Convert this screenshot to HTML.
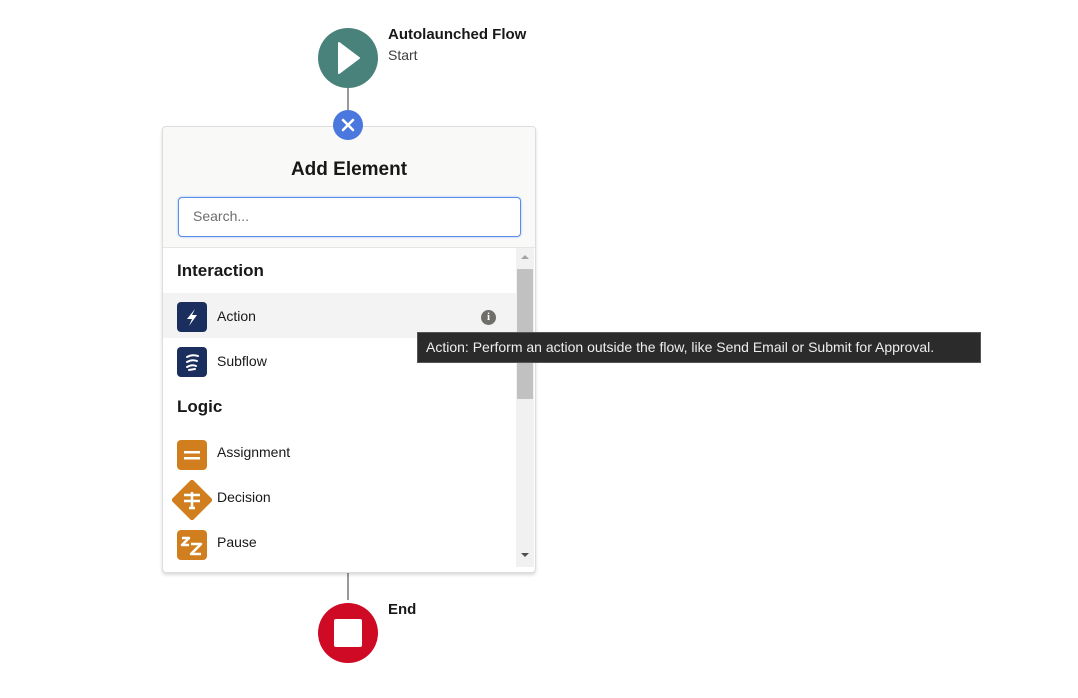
<!DOCTYPE html><html><head><style>
body{margin:0;width:1078px;height:698px;background:#fff;font-family:"Liberation Sans",sans-serif;position:relative;overflow:hidden;color:#181818}
.a{position:absolute}
.ic{position:absolute;left:177px;width:30px;height:30px;border-radius:4px}
.lbl{position:absolute;left:217px;font-size:14px;color:#181818}
</style></head><body>
<div class="a" style="left:347px;top:88px;width:2px;height:30px;background:#999"></div>
<div class="a" style="left:347px;top:566px;width:2px;height:34px;background:#999"></div>
<div class="a" style="left:318px;top:28px;width:60px;height:60px;border-radius:50%;background:#48827a"></div>
<svg class="a" style="left:318px;top:28px" width="60" height="60"><path d="M21 15 L41 30 L21 45Z" fill="#fff" stroke="#fff" stroke-width="2" stroke-linejoin="round"/></svg>
<div class="a" style="left:388px;top:26px;font-size:15px;font-weight:bold">Autolaunched Flow</div>
<div class="a" style="left:388px;top:47px;font-size:14px;color:#3e3e3c">Start</div>
<div class="a" style="left:162px;top:126px;width:372px;height:445px;border:1px solid #ddd;border-radius:4px;background:#fff;box-shadow:0 2px 3px rgba(0,0,0,.15);overflow:hidden">
 <div class="a" style="left:0;top:0;width:372px;height:120px;background:#f9f9f8;border-bottom:1px solid #e5e5e5"></div>
 <div class="a" style="left:0;top:32px;width:372px;text-align:center;font-size:19px;font-weight:bold">Add Element</div>
 <div class="a" style="left:15px;top:70px;width:341px;height:38px;border:1px solid #5a8ee6;border-radius:4px;background:#fff;box-shadow:0 0 2px #9ec0f5"></div>
 <div class="a" style="left:30px;top:81px;font-size:14px;color:#706e6b">Search...</div>
 <div class="a" style="left:353px;top:121px;width:18px;height:319px;background:#f1f1f1"></div>
 <div class="a" style="left:354px;top:142px;width:16px;height:130px;background:#c1c1c1"></div>
 <svg class="a" style="left:353px;top:124px" width="18" height="10"><path d="M5 8 L9 4 L13 8Z" fill="#a3a3a3"/></svg>
 <svg class="a" style="left:353px;top:424px" width="18" height="10"><path d="M5 2 L9 6 L13 2Z" fill="#505050"/></svg>
 <div class="a" style="left:0;top:166px;width:353px;height:45px;background:#f3f3f3"></div>
</div>
<div class="a" style="left:177px;top:261px;font-size:17px;font-weight:bold">Interaction</div>
<div class="a" style="left:177px;top:397px;font-size:17px;font-weight:bold">Logic</div>
<div class="ic" style="top:302px;background:#1b2f5e"></div>
<svg class="a" style="left:177px;top:302px" width="30" height="30"><path d="M18 7 L10 17 L15 17 L12 24 L20 13 L15 13 Z" fill="#fff"/></svg>
<div class="lbl" style="top:308px">Action</div>
<div class="a" style="left:481px;top:310px;width:15px;height:15px;border-radius:50%;background:#706e6b;color:#fff;font-size:11px;font-weight:bold;text-align:center;line-height:15px;font-family:'Liberation Serif',serif">i</div>
<div class="ic" style="top:347px;background:#1b2f5e"></div>
<svg class="a" style="left:177px;top:347px" width="30" height="30" fill="none" stroke="#fff" stroke-width="2" stroke-linecap="round"><path d="M10 10 Q15 7 21 9 M10 15 Q15 12 20 14 M10 20 Q15 17 19 19 M12 23 L18 22"/></svg>
<div class="lbl" style="top:353px">Subflow</div>
<div class="ic" style="top:440px;background:#d17f1e"></div>
<svg class="a" style="left:177px;top:440px" width="30" height="30"><rect x="7" y="11" width="16" height="2.5" fill="#fff"/><rect x="7" y="17" width="16" height="2.5" fill="#fff"/></svg>
<div class="lbl" style="top:444px">Assignment</div>
<svg class="a" style="left:172px;top:480px" width="40" height="40"><path d="M20 1 L39 20 L20 39 L1 20Z" fill="#d17f1e" stroke="#d17f1e" stroke-linejoin="round" stroke-width="3"/><path d="M12 15 H28 M12 21 H28 M20 12 V27 M17 28 H23" stroke="#fff" stroke-width="2.5"/></svg>
<div class="lbl" style="top:489px">Decision</div>
<div class="ic" style="top:530px;background:#d17f1e"></div>
<svg class="a" style="left:177px;top:530px" width="30" height="30" fill="none" stroke="#fff" stroke-width="2.5" stroke-linejoin="round"><path d="M5 8 H12 L5 15 H12 M14 14 H24 L14 24 H24"/></svg>
<div class="lbl" style="top:534px">Pause</div>
<div class="a" style="left:417px;top:332px;width:564px;height:31px;background:#2b2b2b;border:1px solid #555;box-sizing:border-box;color:#eee;font-size:14px;line-height:29px;padding-left:8px">Action: Perform an action outside the flow, like Send Email or Submit for Approval.</div>
<div class="a" style="left:333px;top:110px;width:30px;height:30px;border-radius:50%;background:#4a78df"></div>
<svg class="a" style="left:333px;top:110px" width="30" height="30"><path d="M10 10 L20 20 M20 10 L10 20" stroke="#fff" stroke-width="2.5" stroke-linecap="round"/></svg>
<div class="a" style="left:318px;top:603px;width:60px;height:60px;border-radius:50%;background:#cf0a24"></div>
<div class="a" style="left:334px;top:619px;width:28px;height:28px;background:#fff;border-radius:2px"></div>
<div class="a" style="left:388px;top:601px;font-size:15px;font-weight:bold">End</div>
</body></html>
